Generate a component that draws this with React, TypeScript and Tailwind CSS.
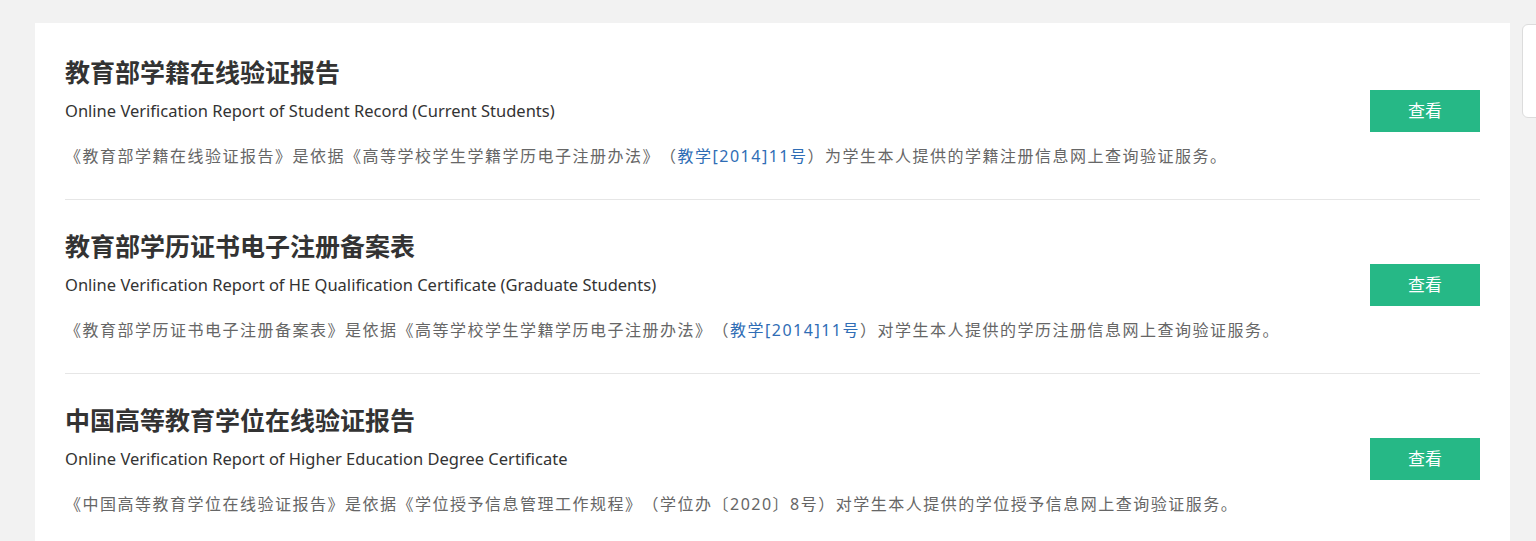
const reports = [
  {
    title: "教育部学籍在线验证报告",
    en: "Online Verification Report of Student Record (Current Students)",
    pre: "《教育部学籍在线验证报告》是依据《高等学校学生学籍学历电子注册办法》（",
    link: "教学[2014]11号",
    post: "）为学生本人提供的学籍注册信息网上查询验证服务。",
  },
  {
    title: "教育部学历证书电子注册备案表",
    en: "Online Verification Report of HE Qualification Certificate (Graduate Students)",
    pre: "《教育部学历证书电子注册备案表》是依据《高等学校学生学籍学历电子注册办法》（",
    link: "教学[2014]11号",
    post: "）对学生本人提供的学历注册信息网上查询验证服务。",
  },
  {
    title: "中国高等教育学位在线验证报告",
    en: "Online Verification Report of Higher Education Degree Certificate",
    pre: "《中国高等教育学位在线验证报告》是依据《学位授予信息管理工作规程》（学位办〔2020〕8号）对学生本人提供的学位授予信息网上查询验证服务。",
    link: "",
    post: "",
  },
];

export default function App() {
  return (
    <div
      className="relative min-h-[541px] overflow-hidden bg-[#f2f2f2] pt-[23px] pl-[35px]"
      style={{ fontFamily: '"Noto Sans", "Noto Sans CJK SC", sans-serif' }}
    >
      <div className="w-[1475px] bg-white px-[30px] pt-[3px] pb-[40px]">
        {reports.map((r, i) => (
          <div
            key={r.title}
            className={`flex items-center justify-between pt-[28px] pb-[31px] ${
              i < reports.length - 1 ? "border-b border-[#e6e6e6]" : ""
            }`}
          >
            <div className="min-w-0">
              <h3 className="text-[25px] font-bold leading-[36px] text-[#333]">{r.title}</h3>
              <p className="mt-[7px] text-[16.5px] leading-[28px] text-[#333]">{r.en}</p>
              <p className="mt-[19px] text-[16px] leading-[24px] tracking-[1.5px] text-[#666] [text-spacing-trim:space-all]">
                {r.pre}
                {r.link && <a className="text-[#2f6db5]">{r.link}</a>}
                {r.post}
              </p>
            </div>
            <button className="h-[42px] w-[110px] flex-shrink-0 bg-[#26b886] text-[17px] text-white">
              查看
            </button>
          </div>
        ))}
      </div>

      {/* floating side toolbar, mostly off the right edge */}
      <div className="absolute left-[1522px] top-[24px] flex h-[94px] w-[60px] flex-col items-center justify-between rounded-[6px] border border-[#dcdcdc] bg-white py-[12px] text-[13px] text-[#999]">
        <span>◐</span>
        <span>标准</span>
      </div>
    </div>
  );
}
